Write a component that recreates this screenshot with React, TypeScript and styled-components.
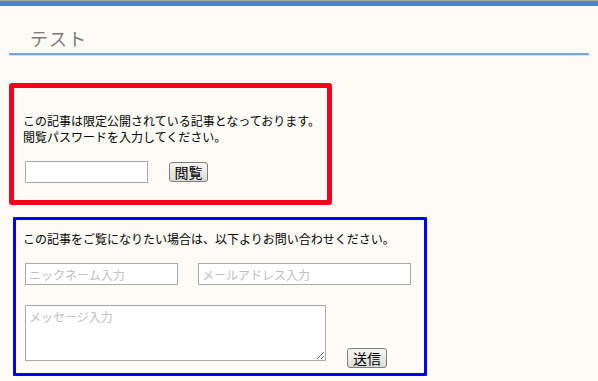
import React from 'react';
import styled, { createGlobalStyle } from 'styled-components';

const GlobalStyle = createGlobalStyle`
  html, body {
    margin: 0;
    padding: 0;
    background: #fcfbf6;
  }
  body {
    font-family: "Noto Sans CJK JP", "DejaVu Sans", sans-serif;
    font-size: 12px;
    color: #000;
  }
`;

const TopBar = styled.div`
  height: 5px;
  border-top: 1px solid #a8aaa2;
  background: #4f84c4;
`;

const Page = styled.div`
  padding: 0 9px;
`;

const Title = styled.h1`
  width: 559px;
  margin: 20px 0 0;
  padding: 0 0 3px 21px;
  font-size: 18px;
  line-height: 24px;
  font-weight: normal;
  color: #7a7a7a;
  letter-spacing: 1px;
  border-bottom: 2px solid #78a5dc;
  box-shadow: 0 1px 0 #d3e0ef;
`;

const Box = styled.div<{ color: string; border: number }>`
  box-sizing: border-box;
  border: ${p => p.border}px solid ${p => p.color};
  border-radius: 3px;
`;

const LockBox = styled(Box)`
  width: 323px;
  height: 122px;
  margin-top: 28px;
  padding: 25px 9px 0;
`;

const ContactBox = styled(Box)`
  width: 414px;
  height: 159px;
  margin: 12px 0 0 4px;
  padding: 11px 7px 0;
  border-radius: 1px;
`;

const Text = styled.p`
  margin: 0;
  line-height: 16px;
  white-space: nowrap;
`;

const Row = styled.div<{ gap: number; top: number }>`
  display: flex;
  align-items: flex-start;
  gap: ${p => p.gap}px;
  margin: ${p => p.top}px 0 0 2px;
`;

const Field = styled.input<{ w: number }>`
  box-sizing: border-box;
  width: ${p => p.w}px;
  height: 22px;
  margin: 0;
  padding: 1px 3px;
  border: 1px solid #a9a9a9;
  background: #fff;
  font: inherit;
  outline: none;
  &::placeholder {
    color: #c0c0c0;
  }
`;

const Message = styled.textarea`
  box-sizing: border-box;
  width: 301px;
  height: 56px;
  margin: 0;
  padding: 2px 3px;
  border: 1px solid #a9a9a9;
  background: #fff;
  font: inherit;
  resize: both;
  outline: none;
  &::placeholder {
    color: #c0c0c0;
  }
`;

const Button = styled.button<{ w: number; h: number; top?: number }>`
  box-sizing: border-box;
  width: ${p => p.w}px;
  height: ${p => p.h}px;
  margin-top: ${p => p.top || 0}px;
  padding: 0;
  border: 1px solid #7e7e7e;
  border-radius: 3px;
  background: linear-gradient(#f6f6f4, #dcdcd8);
  font-family: inherit;
  font-size: 14px;
  line-height: 1;
  color: #000;
`;

export default function App() {
  return (
    <>
      <GlobalStyle />
      <TopBar />
      <Page>
        <Title>テスト</Title>
        <LockBox color="#f5001a" border={5}>
          <Text>この記事は限定公開されている記事となっております。</Text>
          <Text>閲覧パスワードを入力してください。</Text>
          <Row gap={21} top={16}>
            <Field w={123} type="password" />
            <Button w={39} h={20} top={1}>閲覧</Button>
          </Row>
        </LockBox>
        <ContactBox color="#0000f5" border={3}>
          <Text>この記事をご覧になりたい場合は、以下よりお問い合わせください。</Text>
          <Row gap={20} top={16}>
            <Field w={153} placeholder="ニックネーム入力" />
            <Field w={213} placeholder="メールアドレス入力" />
          </Row>
          <Row gap={21} top={20}>
            <Message placeholder="メッセージ入力" />
            <Button w={40} h={20} top={43}>送信</Button>
          </Row>
        </ContactBox>
      </Page>
    </>
  );
}
